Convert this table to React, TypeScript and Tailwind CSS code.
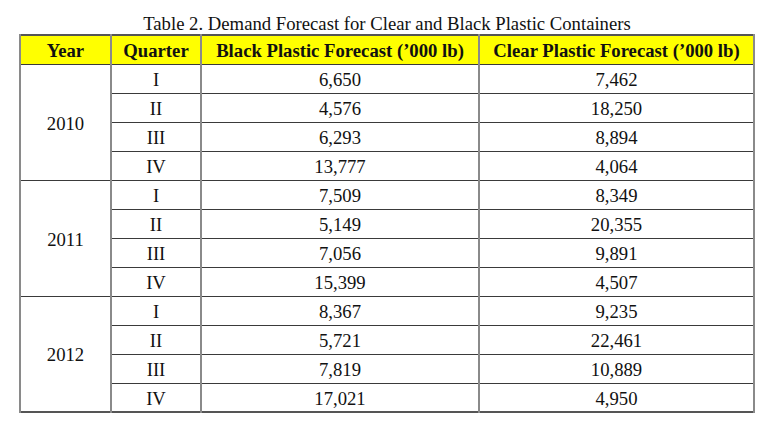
import React from "react";

const data: { year: string; rows: [string, string, string][] }[] = [
  { year: "2010", rows: [["I", "6,650", "7,462"], ["II", "4,576", "18,250"], ["III", "6,293", "8,894"], ["IV", "13,777", "4,064"]] },
  { year: "2011", rows: [["I", "7,509", "8,349"], ["II", "5,149", "20,355"], ["III", "7,056", "9,891"], ["IV", "15,399", "4,507"]] },
  { year: "2012", rows: [["I", "8,367", "9,235"], ["II", "5,721", "22,461"], ["III", "7,819", "10,889"], ["IV", "17,021", "4,950"]] },
];

const cell = "border-y border-y-[#3a3a3a] border-x-2 border-x-[#8a8a8a] text-center px-0 pb-0 pt-[3px] leading-[22px] font-['Liberation_Serif',serif]";

export default function App() {
  return (
    <div className="w-[772px] h-[428px] bg-white text-[#111] pt-[13px] font-['Liberation_Serif',serif]">
      <div className="text-center text-[18.7px] leading-[21px] pl-[2px] h-[21px]">Table 2. Demand Forecast for Clear and Black Plastic Containers</div>
      <table className="ml-[19px] table-fixed border-collapse border-2 border-[#555] font-['Liberation_Serif',serif]" style={{ width: 734 }}>
        <colgroup>
          <col style={{ width: 91 }} />
          <col style={{ width: 90 }} />
          <col style={{ width: 278 }} />
          <col style={{ width: 275 }} />
        </colgroup>
        <thead>
          <tr className="bg-[#ffff00] h-[29px] text-[18.7px] font-bold">
            <th className={cell}>Year</th>
            <th className={cell}>Quarter</th>
            <th className={cell}>Black Plastic Forecast (’000 lb)</th>
            <th className={cell}>Clear Plastic Forecast (’000 lb)</th>
          </tr>
        </thead>
        <tbody className="text-[18.7px]">
          {data.map((g) =>
            g.rows.map((r, i) => (
              <tr key={g.year + i} className="h-[29px]">
                {i === 0 && (
                  <td rowSpan={4} className={cell}>
                    {g.year}
                  </td>
                )}
                <td className={cell}>{r[0]}</td>
                <td className={cell}>{r[1]}</td>
                <td className={cell}>{r[2]}</td>
              </tr>
            ))
          )}
        </tbody>
      </table>
    </div>
  );
}
